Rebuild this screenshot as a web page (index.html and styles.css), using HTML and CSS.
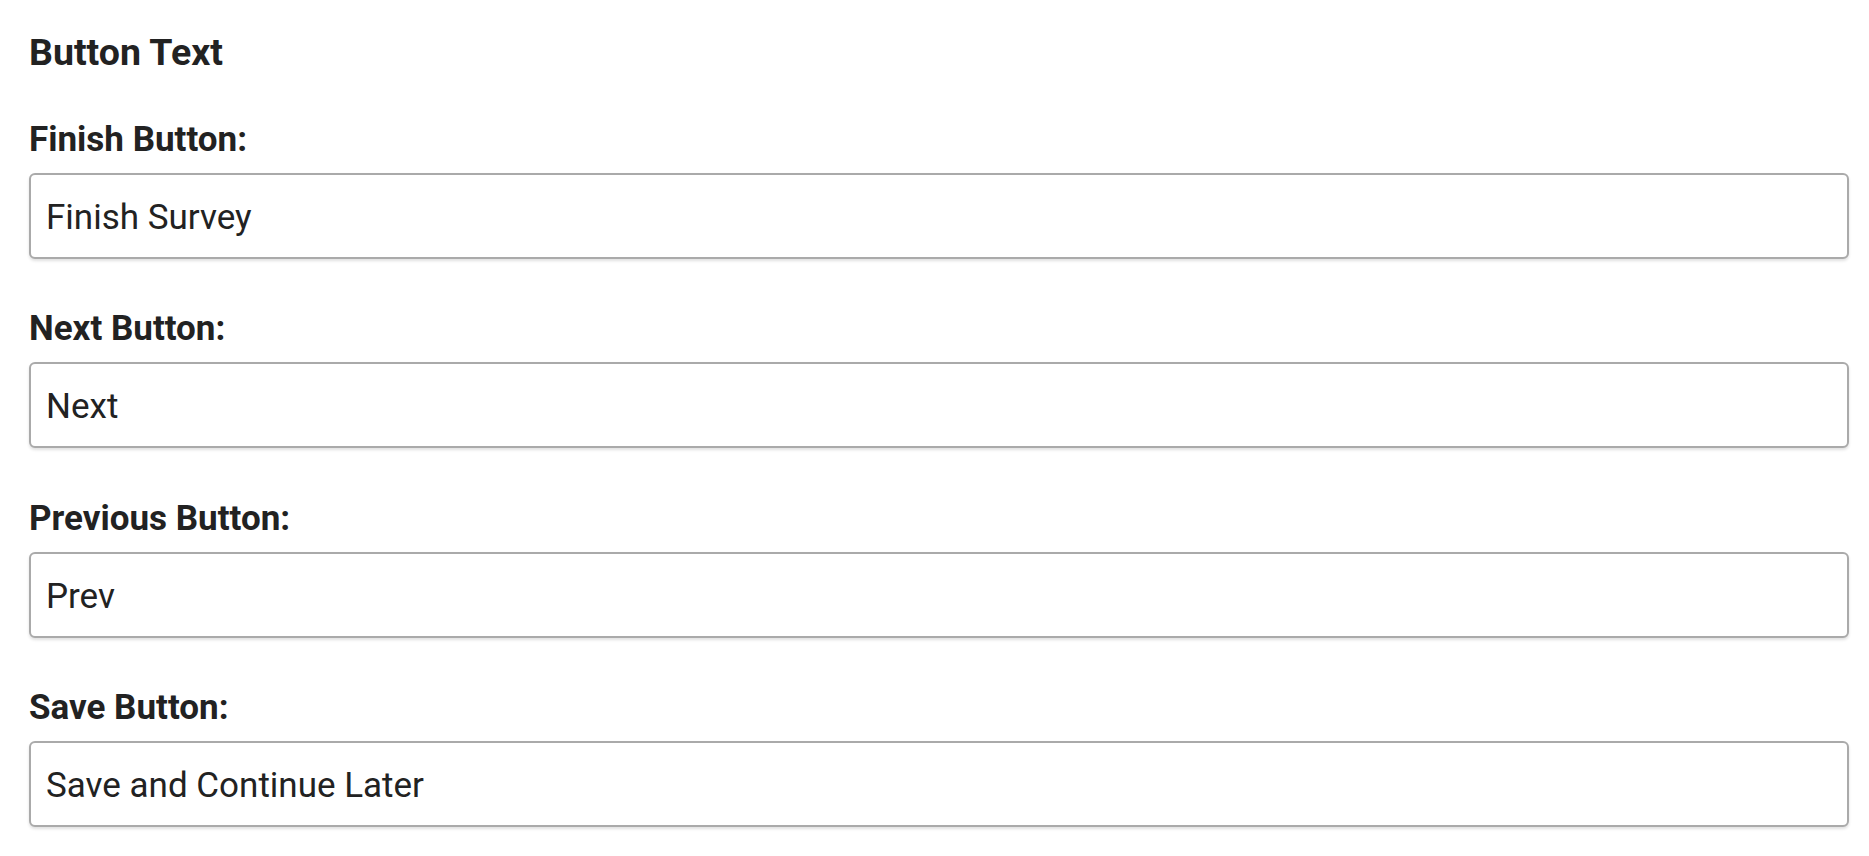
FILE: index.html
```html
<!DOCTYPE html>
<html lang="en">
<head>
  <meta charset="UTF-8" />
  <meta name="viewport" content="width=device-width, initial-scale=1.0"/>
  <title>Button Text</title>
  <link rel="stylesheet" href="styles.css">
</head>
<body>
  <section class="settings">
    <h2>Button Text</h2>

    <div class="field">
      <label for="finishBtn">Finish Button:</label>
      <input type="text" id="finishBtn" value="Finish Survey" />
    </div>

    <div class="field">
      <label for="nextBtn">Next Button:</label>
      <input type="text" id="nextBtn" value="Next" />
    </div>

    <div class="field">
      <label for="prevBtn">Previous Button:</label>
      <input type="text" id="prevBtn" value="Prev" />
    </div>

    <div class="field">
      <label for="saveBtn">Save Button:</label>
      <input type="text" id="saveBtn" value="Save and Continue Later" />
    </div>
  </section>
</body>
</html>
```

FILE: styles.css
```css
body {
  font-family: Roboto, "Noto Sans", Arial, sans-serif;
  margin: 0;
  padding: 0;
  background: white;
  color: #222;
}
.settings {
  padding: 30px 20px 0 29px;
}
.settings h2 {
  font-size: 37.5px;
  line-height: 44px;
  font-weight: bold;
  margin: 0 0 45.5px 0;
}
.field {
  margin-bottom: 50.5px;
}
.field label {
  display: block;
  font-size: 35px;
  line-height: 40px;
  font-weight: bold;
  margin-bottom: 13px;
}
.field input {
  display: block;
  box-sizing: border-box;
  width: 100%;
  height: 86px;
  padding: 3px 15px 0 15px;
  font-family: inherit;
  font-size: 35px;
  color: #222;
  background: white;
  border: 2px solid #aaa;
  border-radius: 6px;
  box-shadow: 0 2px 3px rgba(0,0,0,0.12);
  outline: none;
}
```
